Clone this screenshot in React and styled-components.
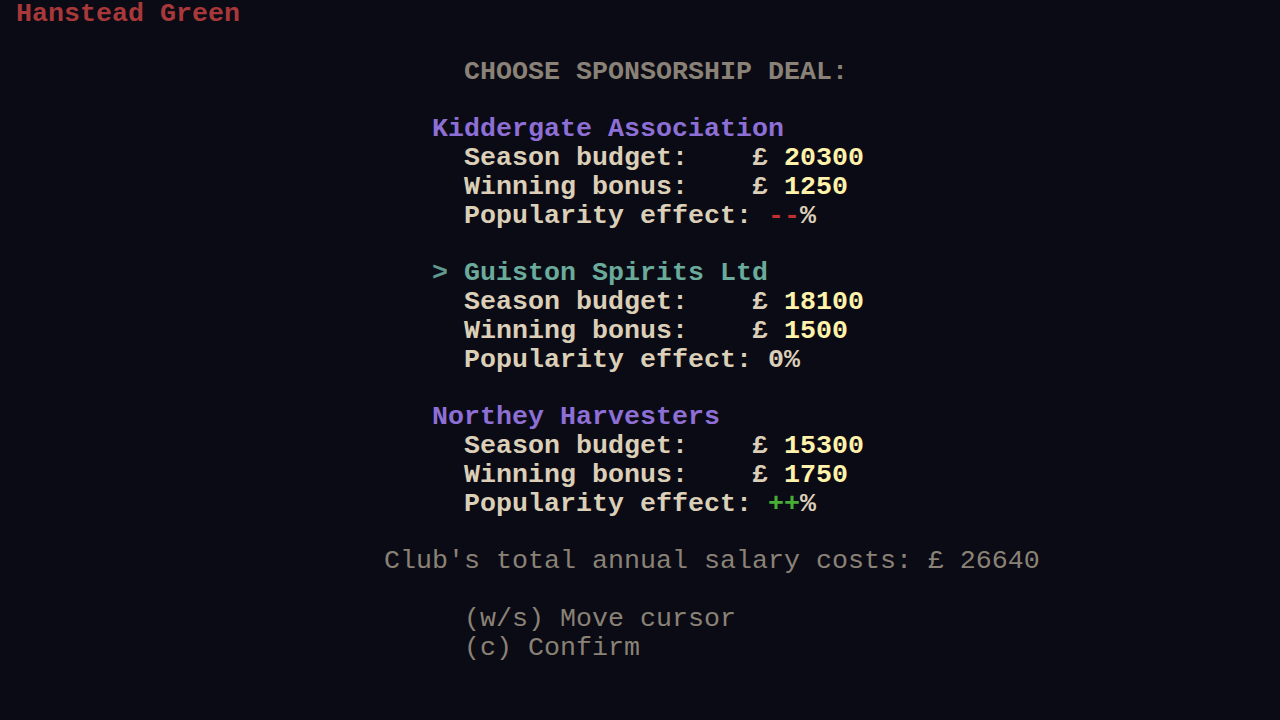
import React from 'react';
import styled, { createGlobalStyle } from 'styled-components';

const GlobalStyle = createGlobalStyle`
    html, body {
        margin: 0;
        padding: 0;
        background: #0b0b15;
    }
`;

const Screen = styled.div`
    width: 1280px;
    height: 720px;
    background: #0b0b15;
    font-family: "Liberation Mono", "DejaVu Sans Mono", monospace;
    font-size: 26.67px;
    overflow: hidden;
    display: flex;
    flex-direction: column;
`;

const Row = styled.div`
    height: 28.8px;
    line-height: 28.8px;
    white-space: pre;
    padding-left: ${p => (p.col || 0) * 16}px;
    font-weight: ${p => (p.thin ? 'normal' : 'bold')};
    color: ${p => p.color || '#dccfb8'};
`;

const Blank = styled.div`
    height: ${p => (p.rows || 1) * 28.8}px;
    flex-shrink: 0;
`;

const Span = styled.span`
    color: ${p => p.color};
`;

const COLORS = {
    red: '#a8383a',
    grey: '#8a8276',
    purple: '#8e6fd6',
    beige: '#dccfb8',
    yellow: '#fff2aa',
    teal: '#6aab9b',
    cursor: '#5f9a8c',
    minus: '#c0302e',
    plus: '#48ad36',
};

const deals = [
    { name: 'Kiddergate Association', budget: 20300, bonus: 1250, effect: '--' },
    { name: 'Guiston Spirits Ltd', budget: 18100, bonus: 1500, effect: '0' },
    { name: 'Northey Harvesters', budget: 15300, bonus: 1750, effect: '++' },
];
const selected = 1;

function effectColor(effect) {
    if (effect.startsWith('-')) return COLORS.minus;
    if (effect.startsWith('+')) return COLORS.plus;
    return COLORS.beige;
}

function Deal({ deal, active }) {
    return (
        <>
            {active ? (
                <Row col={27} color={COLORS.teal}>
                    <Span color={COLORS.cursor}>{'> '}</Span>{deal.name}
                </Row>
            ) : (
                <Row col={27} color={COLORS.purple}>{deal.name}</Row>
            )}
            <Row col={29}>
                {'Season budget:    £ '}<Span color={COLORS.yellow}>{deal.budget}</Span>
            </Row>
            <Row col={29}>
                {'Winning bonus:    £ '}<Span color={COLORS.yellow}>{deal.bonus}</Span>
            </Row>
            <Row col={29}>
                {'Popularity effect: '}<Span color={effectColor(deal.effect)}>{deal.effect}</Span>%
            </Row>
        </>
    );
}

export default function App() {
    return (
        <>
            <GlobalStyle />
            <Screen>
                <Row col={1} color={COLORS.red}>Hanstead Green</Row>
                <Blank />
                <Row col={29} color={COLORS.grey}>CHOOSE SPONSORSHIP DEAL:</Row>
                <Blank />
                {deals.map((d, i) => (
                    <React.Fragment key={d.name}>
                        <Deal deal={d} active={i === selected} />
                        <Blank />
                    </React.Fragment>
                ))}
                <Row col={24} thin color={COLORS.grey}>Club's total annual salary costs: £ 26640</Row>
                <Blank />
                <Row col={29} thin color={COLORS.grey}>(w/s) Move cursor</Row>
                <Row col={29} thin color={COLORS.grey}>(c) Confirm</Row>
            </Screen>
        </>
    );
}
